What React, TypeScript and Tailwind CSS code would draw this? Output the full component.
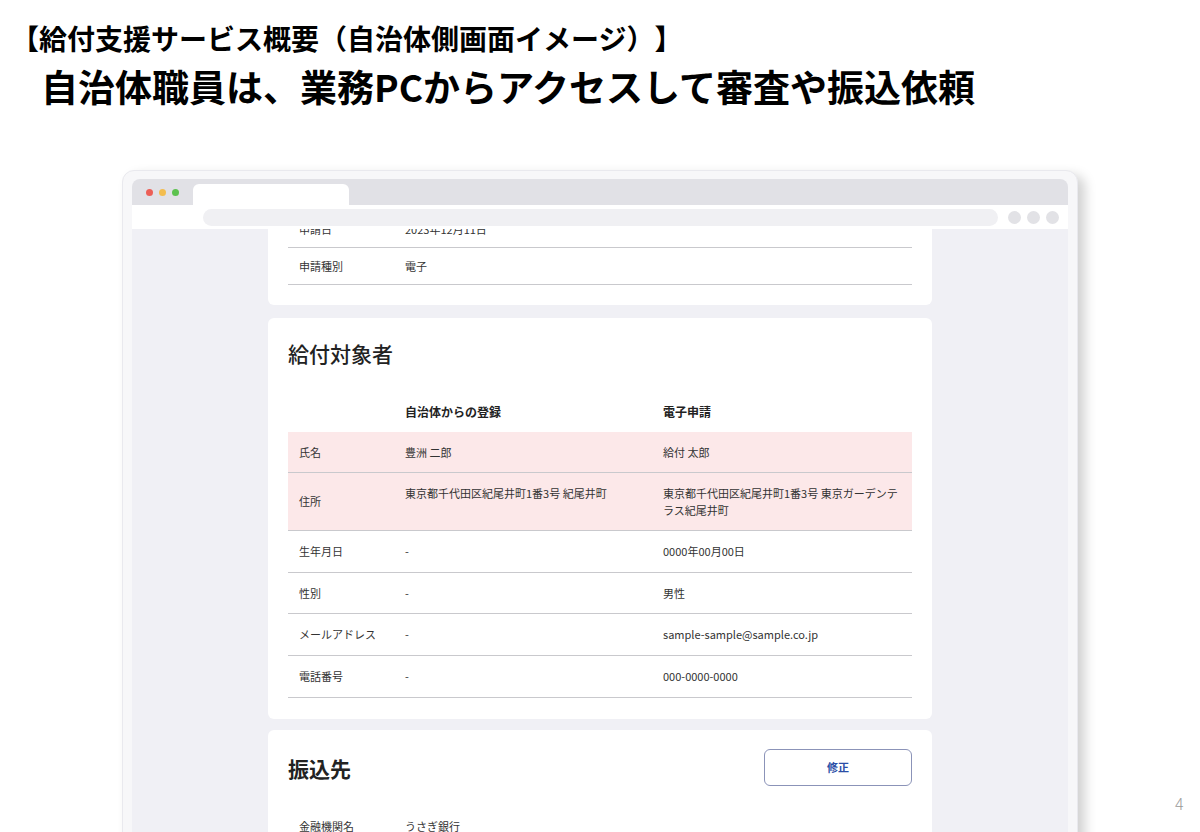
const font = "font-['Noto_Sans_CJK_JP','Noto_Sans',sans-serif]";

type Row = { label: string; local: string[]; online: string[]; pink?: boolean; h: string };

const ROWS: Row[] = [
  { label: "氏名", local: ["豊洲 二郎"], online: ["給付 太郎"], pink: true, h: "h-[41px]" },
  {
    label: "住所",
    local: ["東京都千代田区紀尾井町1番3号 紀尾井町"],
    online: ["東京都千代田区紀尾井町1番3号 東京ガーデンテ", "ラス紀尾井町"],
    pink: true,
    h: "h-[58px]",
  },
  { label: "生年月日", local: ["-"], online: ["0000年00月00日"], h: "h-[42px]" },
  { label: "性別", local: ["-"], online: ["男性"], h: "h-[41px]" },
  { label: "メールアドレス", local: ["-"], online: ["sample-sample@sample.co.jp"], h: "h-[42px]" },
  { label: "電話番号", local: ["-"], online: ["000-0000-0000"], h: "h-[42px]" },
];

function BrowserChrome() {
  return (
    <>
      {/* tab bar */}
      <div className="flex h-[26px] items-end rounded-t-lg bg-[#e1e1e6]">
        <div className="flex h-full w-[61px] items-center gap-[6px] pl-[14px]">
          <span className="h-[7px] w-[7px] rounded-full bg-[#ec5f57]" />
          <span className="h-[7px] w-[7px] rounded-full bg-[#f3bd4f]" />
          <span className="h-[7px] w-[7px] rounded-full bg-[#5cc24f]" />
        </div>
        <div className="h-[21px] w-[156px] rounded-t-md bg-white" />
      </div>
      {/* address bar */}
      <div className="flex h-[24px] items-center bg-white pl-[71px]">
        <div className="h-[17px] w-[795px] rounded-full bg-[#f0f0f3]" />
        <div className="ml-[10px] flex gap-[6px]">
          <span className="h-[13px] w-[13px] rounded-full bg-[#e2e2e6]" />
          <span className="h-[13px] w-[13px] rounded-full bg-[#e2e2e6]" />
          <span className="h-[13px] w-[13px] rounded-full bg-[#e2e2e6]" />
        </div>
      </div>
    </>
  );
}

function TargetTable() {
  return (
    <div className="text-[11px] text-[#333]">
      <div className="flex h-[40px] items-center text-[12px] font-bold text-[#222]">
        <div className="w-[117px]" />
        <div className="w-[258px]">自治体からの登録</div>
        <div className="flex-1">電子申請</div>
      </div>
      {ROWS.map((r) => (
        <div
          key={r.label}
          className={`flex items-center border-b border-[#c9c9cd] ${r.h} ${r.pink ? "bg-[#fce8e9]" : ""}`}
        >
          <div className="w-[117px] pl-[11px]">{r.label}</div>
          <div className={`w-[258px] ${r.online.length > 1 ? "self-start pt-[12px]" : ""}`}>
            {r.local.map((l) => (
              <div key={l} className="whitespace-nowrap leading-[17px]">{l}</div>
            ))}
          </div>
          <div className="flex-1">
            {r.online.map((l) => (
              <div key={l} className="whitespace-nowrap leading-[17px]">{l}</div>
            ))}
          </div>
        </div>
      ))}
    </div>
  );
}

export default function App() {
  return (
    <div className={`relative h-[832px] w-[1200px] overflow-hidden bg-white ${font} [text-spacing-trim:space-all]`}>
      <header className="pt-[21px] text-black">
        <h1 className="pl-[11px] text-[28px] font-bold leading-[34px]">
          【給付支援サービス概要（自治体側画面イメージ）】
        </h1>
        <h2 className="mt-[9px] pl-[41px] text-[37px] font-bold leading-[44px]">
          自治体職員は、業務PCからアクセスして審査や振込依頼
        </h2>
      </header>

      <div className="ml-[122px] mt-[62px] w-[956px] rounded-xl border border-[#e9e9ee] bg-[#f7f7f9] px-[9px] pt-[8px] shadow-[7px_5px_12px_rgba(0,0,0,0.18)]">
        <BrowserChrome />

        <div className="flex h-[620px] flex-col items-center overflow-hidden bg-[#f0f0f5]">
          {/* previous card, scrolled */}
          <div className="-mt-[40px] w-[664px] rounded-md bg-white px-[20px] pb-[20px] pt-[22px] text-[11px] text-[#333]">
            <div className="flex h-[37px] items-center border-b border-[#c9c9cd]">
              <div className="w-[117px] pl-[11px]">申請日</div>
              <div>2023年12月11日</div>
            </div>
            <div className="flex h-[37px] items-center border-b border-[#c9c9cd]">
              <div className="w-[117px] pl-[11px]">申請種別</div>
              <div>電子</div>
            </div>
          </div>

          {/* 給付対象者 */}
          <div className="mt-[13px] w-[664px] rounded-md bg-white px-[20px] pb-[21px] pt-[21px]">
            <h3 className="mb-[25px] text-[21px] font-medium leading-[28px] text-[#222]">給付対象者</h3>
            <TargetTable />
          </div>

          {/* 振込先 */}
          <div className="mt-[11px] w-[664px] rounded-md bg-white px-[20px] pt-[19px]">
            <div className="flex items-center justify-between">
              <h3 className="text-[21px] font-bold leading-[28px] text-[#222]">振込先</h3>
              <button className="h-[37px] w-[148px] rounded-md border border-[#8b93b8] bg-white text-[11px] font-bold text-[#2b4ea6]">
                修正
              </button>
            </div>
            <div className="mt-[20px] flex h-[41px] items-center text-[11px] text-[#333]">
              <div className="w-[117px] pl-[11px]">金融機関名</div>
              <div>うさぎ銀行</div>
            </div>
          </div>
        </div>
      </div>

      <div className="absolute left-[1175px] top-[791px] text-[16px] font-light text-[#999]">4</div>
    </div>
  );
}
